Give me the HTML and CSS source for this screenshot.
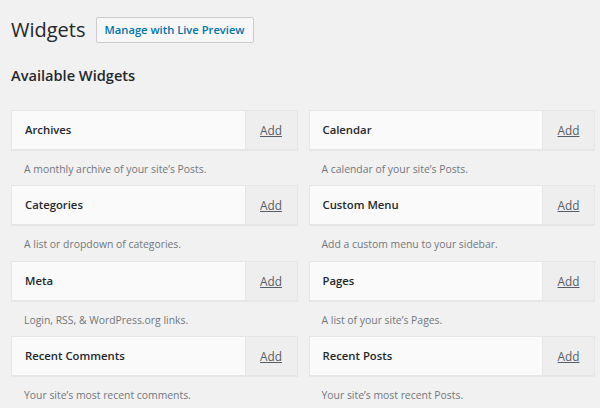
FILE: index.html
```html
<!DOCTYPE html>
<html lang="en">
<head>
    <meta charset="UTF-8">
    <title>Widgets</title>
    <link rel="stylesheet" href="styles.css">
</head>
<body>
    <div class="wrap">
        <div class="page-head">
            <h1 class="page-title">Widgets</h1>
            <a class="title-action" href="#">Manage with Live Preview</a>
        </div>
        <h2 class="section-title">Available Widgets</h2>
        <div class="widget-list">
            <div class="widget">
                <div class="widget-top">
                    <span class="widget-title">Archives</span>
                    <a class="widget-add" href="#">Add</a>
                </div>
                <p class="widget-desc">A monthly archive of your site’s Posts.</p>
            </div>
            <div class="widget">
                <div class="widget-top">
                    <span class="widget-title">Calendar</span>
                    <a class="widget-add" href="#">Add</a>
                </div>
                <p class="widget-desc">A calendar of your site’s Posts.</p>
            </div>
            <div class="widget">
                <div class="widget-top">
                    <span class="widget-title">Categories</span>
                    <a class="widget-add" href="#">Add</a>
                </div>
                <p class="widget-desc">A list or dropdown of categories.</p>
            </div>
            <div class="widget">
                <div class="widget-top">
                    <span class="widget-title">Custom Menu</span>
                    <a class="widget-add" href="#">Add</a>
                </div>
                <p class="widget-desc">Add a custom menu to your sidebar.</p>
            </div>
            <div class="widget">
                <div class="widget-top">
                    <span class="widget-title">Meta</span>
                    <a class="widget-add" href="#">Add</a>
                </div>
                <p class="widget-desc">Login, RSS, &amp; WordPress.org links.</p>
            </div>
            <div class="widget">
                <div class="widget-top">
                    <span class="widget-title">Pages</span>
                    <a class="widget-add" href="#">Add</a>
                </div>
                <p class="widget-desc">A list of your site’s Pages.</p>
            </div>
            <div class="widget">
                <div class="widget-top">
                    <span class="widget-title">Recent Comments</span>
                    <a class="widget-add" href="#">Add</a>
                </div>
                <p class="widget-desc">Your site’s most recent comments.</p>
            </div>
            <div class="widget">
                <div class="widget-top">
                    <span class="widget-title">Recent Posts</span>
                    <a class="widget-add" href="#">Add</a>
                </div>
                <p class="widget-desc">Your site’s most recent Posts.</p>
            </div>
        </div>
    </div>
</body>
</html>
```

FILE: styles.css
```css
body {
    margin: 0;
    background-color: #f1f1f1;
    font-family: "Open Sans", Arial, sans-serif;
    font-size: 11.3px;
    color: #23282d;
}

.wrap {
    padding: 0 5px 0 11px;
}

.page-head {
    display: flex;
    align-items: center;
    gap: 10px;
    padding-top: 17px;
}

.page-title {
    margin: 0;
    font-size: 20px;
    font-weight: 400;
    line-height: 26px;
}

.title-action {
    display: inline-block;
    padding: 0 8px;
    height: 24px;
    line-height: 24px;
    border: 1px solid #ccc;
    border-radius: 2px;
    background-color: #f7f7f7;
    color: #0073aa;
    font-size: 11.2px;
    font-weight: 600;
    text-decoration: none;
}

.section-title {
    margin: 22px 0 25px;
    font-size: 14.6px;
    font-weight: 600;
    line-height: 20px;
}

.widget-list {
    display: grid;
    grid-template-columns: 1fr 1fr;
    column-gap: 11px;
}

.widget-top {
    display: flex;
    height: 38px;
    border: 1px solid #e6e6e6;
    background-color: #fafafa;
    box-shadow: 0 1px 1px rgba(0, 0, 0, 0.04);
}

.widget-title {
    flex: 1;
    padding-left: 13px;
    line-height: 38px;
    font-weight: 600;
}

.widget-add {
    width: 51px;
    border-left: 1px solid #e6e6e6;
    background-color: #eee;
    color: #555d66;
    font-size: 11.8px;
    text-align: center;
    line-height: 38px;
}

.widget-desc {
    margin: 0;
    padding: 10px 0 7.4px 13px;
    height: 18px;
    line-height: 18px;
    font-size: 10.4px;
    color: #72777c;
}
```
